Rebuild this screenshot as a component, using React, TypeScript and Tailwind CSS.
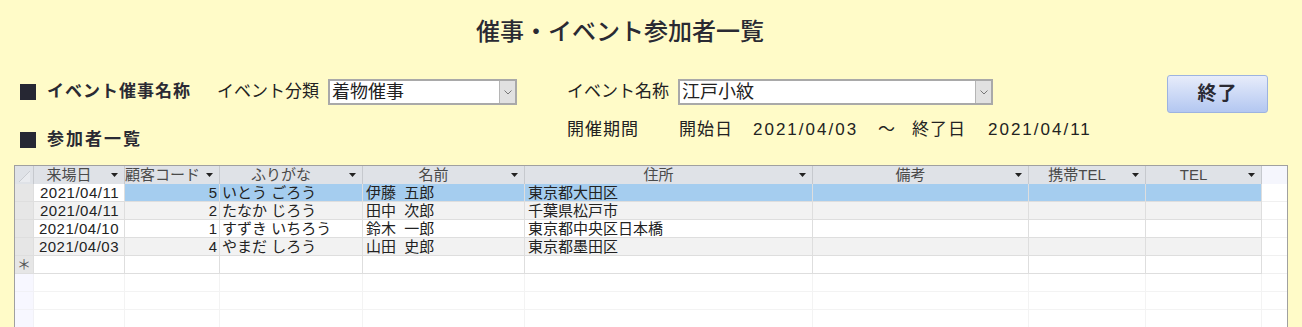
import React from "react";

const FONT = "font-['Liberation_Sans','Noto_Sans_CJK_JP',sans-serif]";

type Row = { date: string; code: number; kana: string; name: string; addr: string };

const ROWS: Row[] = [
  { date: "2021/04/11", code: 5, kana: "いとう ごろう", name: "伊藤  五郎", addr: "東京都大田区" },
  { date: "2021/04/11", code: 2, kana: "たなか じろう", name: "田中  次郎", addr: "千葉県松戸市" },
  { date: "2021/04/10", code: 1, kana: "すずき いちろう", name: "鈴木  一郎", addr: "東京都中央区日本橋" },
  { date: "2021/04/03", code: 4, kana: "やまだ しろう", name: "山田  史郎", addr: "東京都墨田区" },
];

const COLS = "grid grid-cols-[19px_91px_95px_143px_162px_288px_216px_117px_116px_25px]";

const Combo = ({ value, width }: { value: string; width: string }) => (
  <div className={`${width} h-[26px] flex border-2 border-[#a9a9a9] bg-white`}>
    <div className="flex-1 pl-[2px] text-[18px] leading-[22px] text-[#222]">{value}</div>
    <div className="w-[16px] bg-[#e1e1e1] border-l border-[#b5b5b5] flex items-center justify-center">
      <svg width="8" height="5" viewBox="0 0 8 5">
        <polyline points="0.5,0.5 4,4 7.5,0.5" fill="none" stroke="#777" strokeWidth="1" />
      </svg>
    </div>
  </div>
);

const Arrow = () => (
  <div className="w-[20px] flex items-center justify-center">
    <svg width="7" height="5" viewBox="0 0 7 5">
      <polygon points="0,0 7,0 3.5,4" fill="#222" />
    </svg>
  </div>
);

const Head = ({ label, className = "" }: { label: string; className?: string }) => (
  <div className={`flex h-[18px] border-r border-[#c6c9ce] bg-[#dfe2e7] ${className}`}>
    <div className="flex-1 min-w-0 overflow-hidden whitespace-nowrap text-center text-[15px] font-normal leading-[18px] text-[#4a4a4a]">
      {label}
    </div>
    <Arrow />
  </div>
);

const Square = () => <div className="w-[16px] h-[16px] bg-[#262733] shrink-0" />;

export default function App() {
  return (
    <div className={`w-[1302px] h-[327px] overflow-hidden bg-[#fffbc8] text-[#222] ${FONT}`}>
      <h1 className="pt-[16px] h-[48px] pr-[62px] text-center text-[24px] leading-[32px] font-medium text-[#2a2a33]">
        催事・イベント参加者一覧
      </h1>

      {/* event row */}
      <div className="mt-[31px] flex items-start h-[26px]">
        <div className="w-[217px] pl-[20px] h-[26px] flex items-center gap-[11px]">
          <Square />
          <span className="text-[17px] font-bold tracking-[1px] text-[#2a2a33]">イベント催事名称</span>
        </div>
        <span className="w-[111px] text-[17px] leading-[26px]">イベント分類</span>
        <Combo value="着物催事" width="w-[189px]" />
        <span className="ml-[50px] w-[111px] text-[17px] leading-[26px]">イベント名称</span>
        <Combo value="江戸小紋" width="w-[315px]" />
        <button className="ml-[174px] -mt-[4px] w-[101px] h-[38px] rounded-[3px] border border-[#9db3e0] bg-gradient-to-b from-[#e7ecfa] to-[#b3c7f1] text-[19px] font-bold tracking-[1px] text-[#2a2a33]">
          終了
        </button>
      </div>

      {/* period row */}
      <div className="mt-[15px] flex items-start h-[30px]">
        <div className="w-[567px] pl-[20px] pt-[10px] flex items-center gap-[11px] h-[30px]">
          <Square />
          <span className="text-[17px] font-bold tracking-[2px] leading-[20px] text-[#2a2a33]">参加者一覧</span>
        </div>
        <div className="flex text-[17px] leading-[20px] whitespace-nowrap">
          <span className="w-[112px] tracking-[1px]">開催期間</span>
          <span className="w-[74px] tracking-[1px]">開始日</span>
          <span className="w-[125px] tracking-[2px]">2021/04/03</span>
          <span className="w-[34px]">～</span>
          <span className="w-[76px] tracking-[1px]">終了日</span>
          <span className="tracking-[2px]">2021/04/11</span>
        </div>
      </div>

      {/* datasheet */}
      <div className="mt-[15px] ml-[14px] w-[1274px] border border-[#a0a0a0] bg-white">
        <div className={COLS}>
          <div className="h-[18px] border-r border-[#c6c9ce] bg-[#dfe2e7] flex items-end justify-end pr-[3px] pb-[2px]">
            <svg width="11" height="11" viewBox="0 0 11 11">
              <polygon points="11,0 11,11 0,11" fill="#e9ebef" />
              <line x1="0" y1="11" x2="11" y2="0" stroke="#c9ccd1" strokeWidth="1" />
            </svg>
          </div>
          <Head label="来場日" />
          <Head label="顧客コード" />
          <Head label="ふりがな" />
          <Head label="名前" />
          <Head label="住所" />
          <Head label="備考" />
          <Head label="携帯TEL" />
          <Head label="TEL" />
          <div className="h-[18px] bg-[#f5f6fd]" />

          {ROWS.map((r, i) => {
            const base = i % 2 === 1 ? "bg-[#f2f2f2]" : "bg-white";
            const sel = i === 0 ? "bg-[#a5cdef]" : base;
            const cell = "h-[18px] border-r border-b border-[#dedede] text-[15px] leading-[17px] whitespace-pre overflow-hidden";
            return (
              <React.Fragment key={i}>
                <div className={`${cell} bg-[#e6e6e6]`} />
                <div className={`${cell} ${base} text-right pr-[5px] tracking-[0.5px]`}>{r.date}</div>
                <div className={`${cell} ${sel} text-right pr-[2px]`}>{r.code}</div>
                <div className={`${cell} ${sel} pl-[2px]`}>{r.kana}</div>
                <div className={`${cell} ${sel} pl-[3px]`}>{r.name}</div>
                <div className={`${cell} ${sel} pl-[3px]`}>{r.addr}</div>
                <div className={`${cell} ${sel}`} />
                <div className={`${cell} ${sel}`} />
                <div className={`${cell} ${sel}`} />
                <div className="h-[18px] border-b border-[#f0f0f0] bg-white" />
              </React.Fragment>
            );
          })}

          {/* new record row */}
          <div className="h-[18px] border-r border-b border-[#dedede] bg-[#e6e6e6] text-center text-[14px] leading-[17px] text-[#555]">
            ＊
          </div>
          {Array.from({ length: 8 }).map((_, j) => (
            <div key={j} className="h-[18px] border-r border-b border-[#dedede] bg-white" />
          ))}
          <div className="h-[18px] border-b border-[#f0f0f0] bg-white" />

          {/* empty area */}
          {Array.from({ length: 3 }).map((_, k) => (
            <React.Fragment key={k}>
              <div className="h-[18px] border-r border-b border-[#f1f1f6] bg-[#f7f7ff]" />
              {Array.from({ length: 8 }).map((_, j) => (
                <div key={j} className="h-[18px] border-r border-b border-[#f3f3f3] bg-white" />
              ))}
              <div className="h-[18px] border-b border-[#f3f3f3] bg-white" />
            </React.Fragment>
          ))}
        </div>
      </div>
    </div>
  );
}
